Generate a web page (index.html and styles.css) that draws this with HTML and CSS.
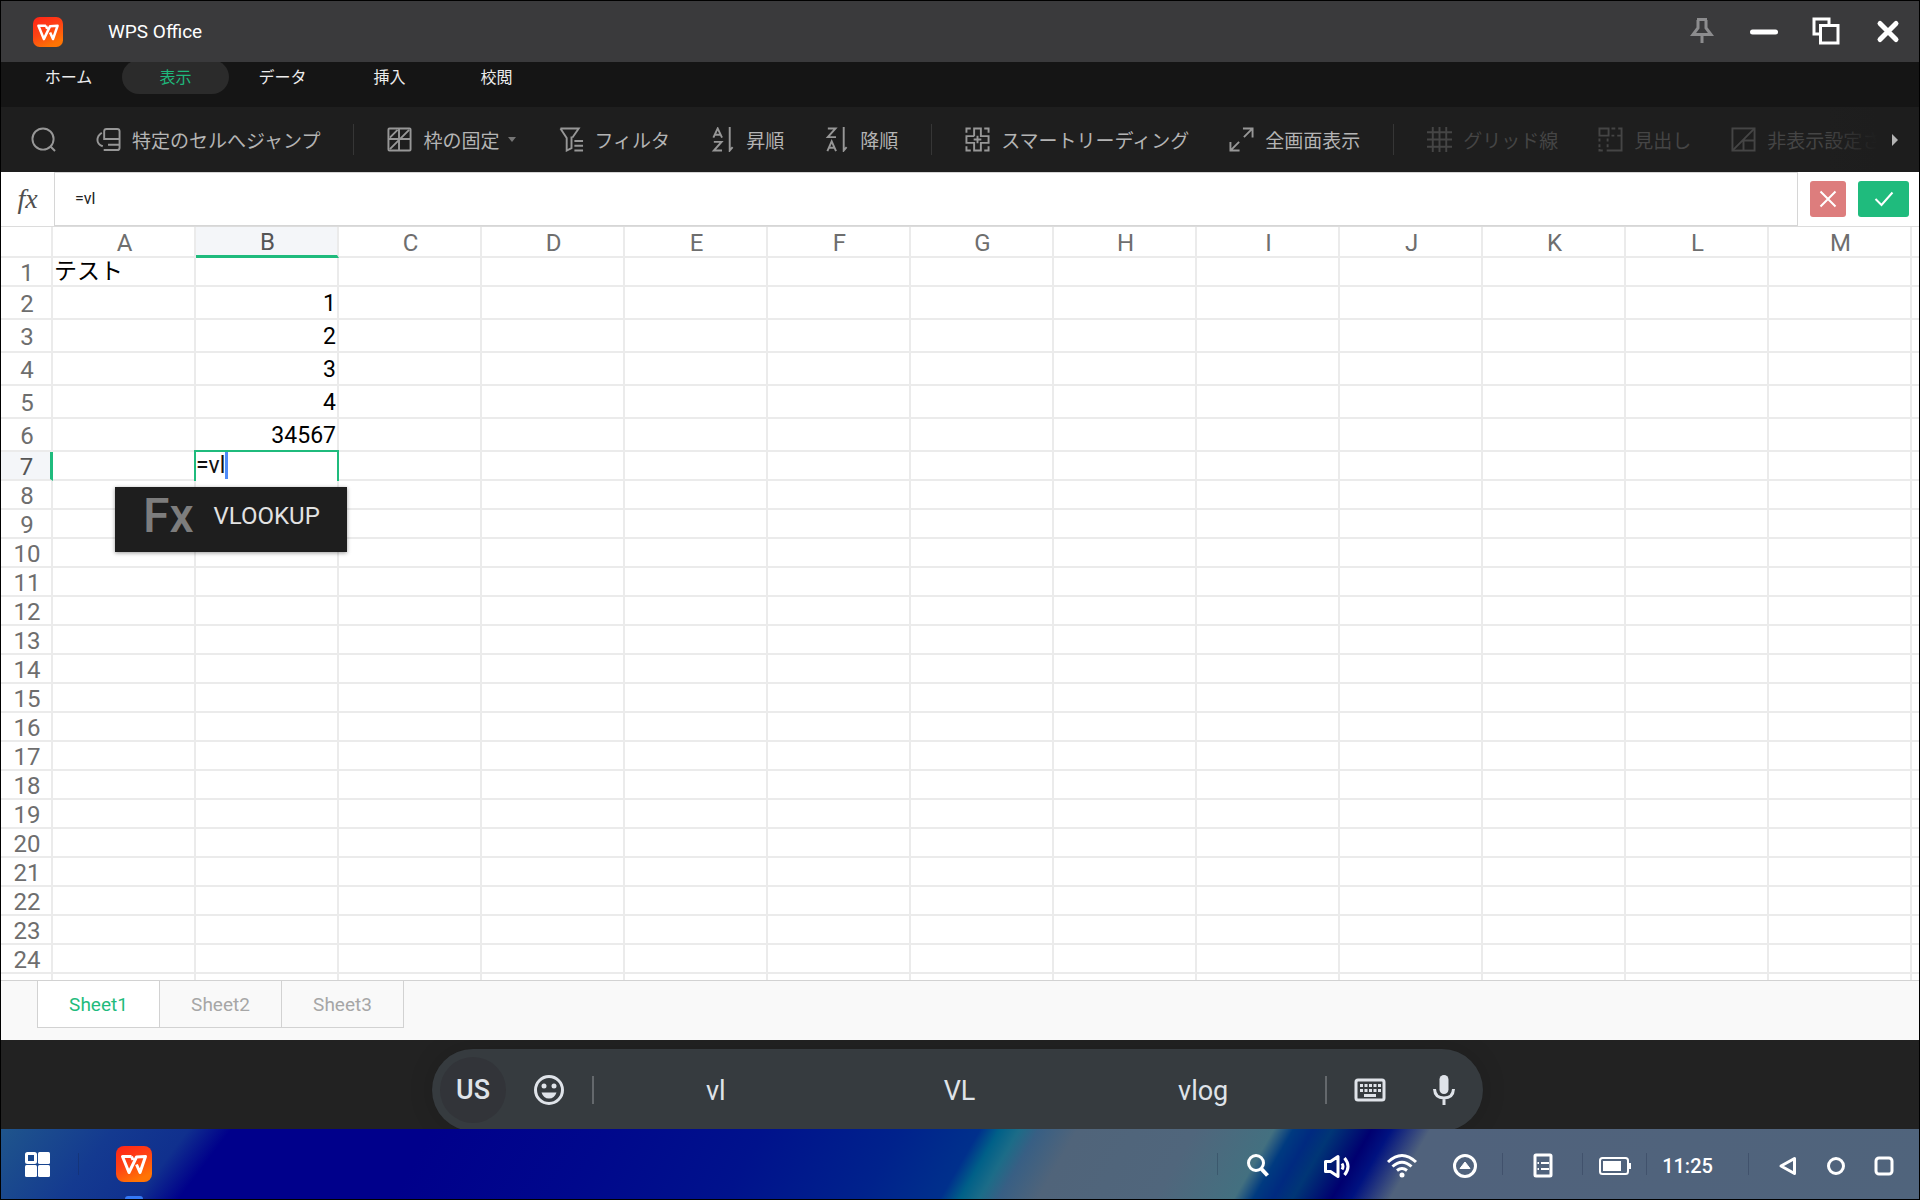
FILE: index.html
```html
<!DOCTYPE html>
<html lang="ja">
<head>
<meta charset="utf-8">
<meta name="viewport" content="width=device-width, initial-scale=1">
<title>WPS Office</title>
<link rel="stylesheet" href="styles.css">
</head>
<body>
<svg class="defs" aria-hidden="true">
  <defs>
    <linearGradient id="logo-fill" x1="0" y1="0" x2=".5" y2="1">
      <stop offset="0" stop-color="#ff2418"/><stop offset=".55" stop-color="#ff4414"/><stop offset="1" stop-color="#ff7404"/>
    </linearGradient>
    <symbol id="wps" viewBox="0 0 36 36">
      <rect width="36" height="36" rx="8" fill="url(#logo-fill)"/>
      <path d="M15.500 10.500H6.500L13 26.500L20.500 11L29.500 10.500L24 26.500L20.500 18.500M15.500 10.500L17 14" fill="none" stroke="#fff" stroke-width="3" stroke-linejoin="round"/>
    </symbol>
  </defs>
</svg>

<div class="app">
  <header class="titlebar">
    <svg class="titlebar-logo" viewBox="0 0 36 36" aria-hidden="true"><use href="#wps"/></svg>
    <h1 class="title">WPS Office</h1>
    <div class="window-controls">
      <button class="window-button pin" aria-label="ピン留め"><svg width="24" height="28" viewBox="0 0 24 28"><path d="M7 2.500H17M8 3V11L3 17.500H21L16 11V3M12 18V26" stroke-width="3"/></svg></button>
      <button class="window-button" aria-label="最小化"><svg width="28" height="28" viewBox="0 0 28 28"><path d="M2.500 15H25.500" stroke-width="5" stroke-linecap="round"/></svg></button>
      <button class="window-button" aria-label="元に戻す"><svg width="28" height="28" viewBox="0 0 28 28"><path d="M17 8V2H2V17H8M8.500 8.500H26V26H8.500Z" stroke-width="3"/></svg></button>
      <button class="window-button" aria-label="閉じる"><svg width="28" height="28" viewBox="0 0 28 28"><path d="M6 6.500L22 22.500M22 6.500L6 22.500" stroke-width="5" stroke-linecap="round"/></svg></button>
    </div>
  </header>

  <nav class="tabs" aria-label="メニュー">
    <button class="tab">ホーム</button>
    <button class="tab tab-active">表示</button>
    <button class="tab">データ</button>
    <button class="tab">挿入</button>
    <button class="tab">校閲</button>
  </nav>

  <div class="toolbar" role="toolbar" aria-label="表示">
    <button class="tool" aria-label="検索"><svg class="tool-icon" viewBox="0 0 26 26"><circle cx="12.500" cy="12.500" r="11"/><path d="M20 20L25 25"/></svg></button>
    <button class="tool"><svg class="tool-icon" viewBox="0 0 26 26"><path d="M8.500 10V4.500Q8.500 2 11 2H22Q24.500 2 24.500 4.500V21.500Q24.500 24 22 24H8M8.500 8V12.500H24.500M12.500 18.500H24M6 6Q1.500 9 1.500 13.500Q1.500 18 7 20"/></svg>特定のセルへジャンプ</button>
    <span class="divider"></span>
    <button class="tool"><svg class="tool-icon" viewBox="0 0 26 26"><rect x="1.500" y="1.500" width="23" height="23" rx="1"/><path d="M2 12.500H24M12.500 2V24M11 3L3 11M23 3L3 23"/></svg>枠の固定<span class="caret"></span></button>
    <button class="tool"><svg class="tool-icon" viewBox="0 0 26 26"><path d="M1.500 1.500H20.500L14 11M1.500 1.500L8 11.500V24.500L13 22V10M16 14.500H25M16 19.500H25M16 24.500H25"/></svg>フィルタ</button>
    <button class="tool"><svg class="tool-icon" viewBox="0 0 26 26"><path d="M3.500 11L8 1.500L12.500 11M5 8H11M4 15.500H12L4 24.500H12.500M20.500 0V24.500L23.500 21"/></svg>昇順</button>
    <button class="tool"><svg class="tool-icon" viewBox="0 0 26 26"><path d="M4 1.500H12L4 10.500H12.500M3.500 25L8 15L12.500 25M5 21.500H11M20.500 0V24.500L23.500 21"/></svg>降順</button>
    <span class="divider"></span>
    <button class="tool"><svg class="tool-icon" viewBox="0 0 26 26"><path d="M1.500 6V1.500H6M20 1.500H24.500V6M1.500 20V24.500H6M20 24.500H24.500V20M9.500 9.500V1.500H16.500V9.500H24.500V16.500H16.500V24.500H9.500V16.500H1.500V9.500H9.500M13 9V17M9 13H17"/></svg>スマートリーディング</button>
    <button class="tool"><svg class="tool-icon" viewBox="0 0 26 26"><path d="M14.500 1.500H24.500V11M24 2L15.500 10.500M1.500 15.500V24.500H11M2 24L10.500 15.500"/></svg>全画面表示</button>
    <span class="divider"></span>
    <button class="tool" disabled><svg class="tool-icon" viewBox="0 0 26 26"><path d="M0 5.500H26M0 13H26M0 20.500H26M6 0V26M13 0V26M20 0V26"/></svg>グリッド線</button>
    <button class="tool" disabled><svg class="tool-icon" viewBox="0 0 26 26"><path d="M1.500 1.500H11V9H1.500ZM14 1.500H18M21 1.500H24.500V24.500H9M24 9H20M17 9H14M1.500 12V15M1.500 18V21M1.500 23V24.500H5M10 12V15M10 18V21"/></svg>見出し</button>
    <button class="tool" disabled><svg class="tool-icon" viewBox="0 0 26 26"><rect x="1.500" y="1.500" width="23" height="23"/><path d="M24 2L2 24M24 14H13V24"/></svg>非表示設定された</button>
    <button class="toolbar-scroll" aria-label="次へ"><span class="scroll-arrow"></span></button>
  </div>

  <div class="formula-bar">
    <label class="formula-label" for="formula">fx</label>
    <input class="formula-input" id="formula" type="text" value="=vl">
    <div class="formula-actions">
      <button class="formula-cancel" aria-label="キャンセル"><svg width="18" height="18" viewBox="0 0 18 18"><path d="M1.500 1.500L16.500 16.500M16.500 1.500L1.500 16.500"/></svg></button>
      <button class="formula-accept" aria-label="確定"><svg width="20" height="16" viewBox="0 0 20 16"><path d="M1.500 8L7.500 14L18.500 1.500"/></svg></button>
    </div>
  </div>

  <main class="grid">
    <table class="sheet">
      <thead class="sheet-head"></thead>
      <tbody class="sheet-body"></tbody>
    </table>
  </main>

  <div class="sheet-tabs">
    <button class="sheet-tab sheet-tab-active">Sheet1</button>
    <button class="sheet-tab">Sheet2</button>
    <button class="sheet-tab">Sheet3</button>
  </div>

  <div class="ime-area">
    <div class="ime">
      <button class="ime-lang">US</button>
      <button class="ime-icon" aria-label="絵文字"><svg width="32" height="32" viewBox="0 0 32 32"><circle cx="16" cy="16" r="13.500" fill="none" stroke="#dfe3e9" stroke-width="3"/><circle cx="11" cy="12" r="2.500"/><circle cx="21" cy="12" r="2.500"/><path d="M8.500 18.500H23.500Q21.500 24.500 16 24.500Q10.500 24.500 8.500 18.500Z"/></svg></button>
      <div class="suggestions">
        <button class="suggestion">vl</button>
        <button class="suggestion">VL</button>
        <button class="suggestion">vlog</button>
      </div>
      <button class="ime-icon ime-keyboard" aria-label="キーボード"><svg width="32" height="24" viewBox="0 0 32 24"><rect x="2" y="2" width="28" height="20" rx="2" fill="none" stroke="#dfe3e9" stroke-width="3"/><path d="M6 6h3v3H6zM10.500 6h3v3h-3zM15 6h3v3h-3zM19.500 6h3v3h-3zM24 6h3v3h-3zM6 11h3v3H6zM10.500 11h3v3h-3zM15 11h3v3h-3zM19.500 11h3v3h-3zM24 11h3v3h-3zM10 16h12v3H10z"/></svg></button>
      <button class="ime-icon ime-mic" aria-label="音声入力"><svg width="24" height="32" viewBox="0 0 24 32"><rect x="7.500" y="1" width="9" height="19" rx="4.500"/><path d="M2.500 15Q3 24 12 24Q21 24 21.500 15M12 24V31" fill="none" stroke="#dfe3e9" stroke-width="3"/></svg></button>
    </div>
  </div>

  <footer class="taskbar">
    <button class="task-button task-start" aria-label="アプリ一覧"><svg width="25" height="25" viewBox="0 0 25 25"><rect x="1.500" y="1.500" width="9" height="9" rx="1" fill="none" stroke="#fff" stroke-width="3"/><rect x="13" width="12" height="12" rx="1.500" fill="#fff"/><rect y="13" width="12" height="12" rx="1.500" fill="#fff"/><rect x="13" y="13" width="12" height="12" rx="1.500" fill="#fff"/></svg></button>
    <span class="task-divider"></span>
    <button class="task-button task-app" aria-label="WPS Office"><svg width="36" height="36" viewBox="0 0 36 36"><use href="#wps"/></svg></button>
    <div class="tray">
      <span class="task-divider"></span>
      <button class="task-button tray-wide" aria-label="検索"><svg width="24" height="26" viewBox="0 0 24 26"><circle cx="10" cy="10" r="7.500"/><path d="M15.500 16L21.500 22.500" stroke-width="4"/></svg></button>
      <button class="task-button tray-wide" aria-label="音量"><svg width="28" height="24" viewBox="0 0 28 24"><path d="M2.500 7.500H7.500L15 2.500V22.500L7.500 17.500H2.500ZM19 9.500Q21 12.500 19 15.500M21.500 4Q28.500 12.500 21.500 21"/></svg></button>
      <button class="task-button tray-narrow" aria-label="Wi-Fi"><svg width="32" height="26" viewBox="0 0 32 26"><path d="M2 9Q16 -4 30 9M6.500 13.500Q16 5 25.500 13.500M11 17.500Q16 13.500 21 17.500"/><circle cx="16" cy="22" r="2.500" fill="#fff" stroke="none"/></svg></button>
      <button class="task-button tray-medium" aria-label="展開"><svg width="26" height="26" viewBox="0 0 26 26"><circle cx="13" cy="13" r="10.500"/><path d="M13 9L18 15.500H8Z" fill="#fff" stroke-width="1"/></svg></button>
      <span class="task-divider"></span>
      <button class="task-button tray-wide" aria-label="通知"><svg width="20" height="26" viewBox="0 0 20 26"><rect x="2" y="2" width="16" height="21" rx="1" stroke-width="3"/><path d="M4.500 10H6M8 10H16M4.500 16H6M8 16H16" stroke-width="2"/></svg></button>
      <span class="task-divider"></span>
      <span class="task-status battery"><svg width="32" height="20" viewBox="0 0 32 20"><rect x="1" y="2" width="28" height="16" rx="2.500" stroke-width="2"/><rect x="4" y="5" width="18" height="10" fill="#fff" stroke="none"/><path d="M31 7V13" stroke-width="2"/></svg></span>
      <span class="task-divider"></span>
      <time class="task-status clock">11:25</time>
      <span class="task-divider"></span>
      <div class="nav-buttons">
        <button class="task-button nav-button" aria-label="戻る"><svg width="20" height="20" viewBox="0 0 20 20"><path d="M16.500 2.500V17.500L3 10Z"/></svg></button>
        <button class="task-button nav-button" aria-label="ホーム"><svg width="20" height="20" viewBox="0 0 20 20"><circle cx="10" cy="10" r="7.500"/></svg></button>
        <button class="task-button nav-button" aria-label="履歴"><svg width="20" height="20" viewBox="0 0 20 20"><rect x="2" y="2" width="16" height="16" rx="3"/></svg></button>
      </div>
    </div>
  </footer>
</div>
<script src="sheet.js"></script>
</body>
</html>
```
FILE: styles.css
```css
* {
  box-sizing: border-box;
}

body {
  margin: 0;
  background: #000;
  font-family: Roboto, "Noto Sans CJK JP", sans-serif;
}

button {
  margin: 0;
  padding: 0;
  border: 0;
  background: none;
  color: inherit;
  font: inherit;
  white-space: nowrap;
}

svg {
  display: block;
  flex: none;
}

.defs {
  position: absolute;
  width: 0;
  height: 0;
}

.app {
  display: flex;
  flex-direction: column;
  height: 100vh;
  border: 1px solid #000;
  overflow: hidden;
}

/* Title bar */
.titlebar {
  flex: none;
  display: flex;
  align-items: center;
  height: 61px;
  padding: 0 0 0 32px;
  background: #3a3a3c;
  color: #fff;
}

.titlebar-logo {
  width: 30px;
  height: 30px;
}

.title {
  flex: 1;
  margin: 0 0 0 45px;
  font-size: 19px;
  font-weight: 400;
}

.window-controls {
  display: flex;
}

.window-button {
  display: flex;
  align-items: center;
  justify-content: center;
  width: 62px;
  height: 61px;
  padding-bottom: 2px;
}

.window-button svg {
  fill: none;
  stroke: #fff;
}

.pin svg {
  stroke: #8c8c8e;
}

/* Ribbon tabs */
.tabs {
  flex: none;
  display: flex;
  align-items: center;
  height: 45px;
  padding: 0 0 15px 14px;
  overflow: hidden;
  background: #151515;
}

.tab {
  flex: none;
  width: 107px;
  height: 34px;
  padding-bottom: 2px;
  border-radius: 17px;
  color: #ececec;
  font-size: 16px;
}

.tab-active {
  background: #2b2b2b;
  color: #1fb97c;
}

/* Tools */
.toolbar {
  position: relative;
  flex: none;
  display: flex;
  align-items: center;
  height: 65px;
  padding-left: 10px;
  overflow: hidden;
  background: #1e1e1e;
  color: #b4b4b4;
}

.tool {
  flex: none;
  display: flex;
  align-items: center;
  gap: 11px;
  padding: 4px 20px 0;
  font-size: 19px;
  line-height: 28px;
}

.tool:disabled {
  color: #454545;
}

.tool-icon {
  width: 25px;
  height: 25px;
  margin-bottom: 4px;
  fill: none;
  stroke: #979797;
  stroke-width: 2;
}

.tool:disabled .tool-icon {
  stroke: #454545;
}

.divider {
  flex: none;
  width: 1px;
  height: 31px;
  margin: 0 13px;
  background: #363636;
}

.caret {
  width: 8px;
  margin: 0 3px 4px -3px;
  border: 4px solid transparent;
  border-top: 5px solid #757575;
  border-bottom: 0;
}

.toolbar-scroll {
  position: absolute;
  inset: 0 0 0 auto;
  display: flex;
  align-items: center;
  justify-content: flex-end;
  width: 92px;
  padding-right: 21px;
  background: linear-gradient(90deg, rgba(30, 30, 30, 0), #1d1d1d 50px);
}

.scroll-arrow {
  border: 6px solid transparent;
  border-left: 6px solid #b4b4b4;
  border-right: 0;
}

/* Formula bar */
.formula-bar {
  flex: none;
  display: flex;
  height: 55px;
  border-bottom: 1px solid #dcdcdc;
  background: #fff;
}

.formula-label {
  display: flex;
  align-items: center;
  justify-content: center;
  width: 53px;
  color: #505050;
  font: italic 28px "Liberation Serif", serif;
}

.formula-input {
  flex: 1;
  min-width: 0;
  padding: 0 20px 2px;
  border: 1px solid #d6d6d6;
  outline: 0;
  background: #fff;
  color: #222;
  font: 16px Roboto, sans-serif;
}

.formula-actions {
  display: flex;
  align-items: center;
  gap: 12px;
  padding: 0 10px 0 12px;
}

.formula-cancel,
.formula-accept {
  display: flex;
  align-items: center;
  justify-content: center;
  height: 36px;
  border-radius: 3px;
}

.formula-cancel {
  width: 36px;
  background: #dd7d7d;
}

.formula-accept {
  width: 51px;
  background: #1fbb7d;
}

.formula-actions svg {
  fill: none;
  stroke: #fff;
  stroke-width: 2;
}

/* Spreadsheet grid */
.grid {
  flex: 1;
  min-height: 0;
  overflow: hidden;
  background: #fff;
}

.sheet {
  width: 100%;
  table-layout: fixed;
  border-collapse: separate;
  border-spacing: 0;
  line-height: 24px;
}

.sheet th,
.sheet td {
  height: 29px;
  padding: 2px 0 0;
  border: solid #ebebeb;
  border-width: 0 2px 2px 0;
  white-space: nowrap;
}

.sheet th {
  width: 143px;
  padding-left: 2px;
  color: #6e6e6e;
  font-size: 24px;
  font-weight: 400;
}

.sheet .corner {
  width: 52px;
}

.sheet .rest {
  width: auto;
  border-right: 0;
}

.sheet thead th {
  height: 31px;
}

.sheet .tall td {
  height: 33px;
}

.sheet td {
  color: #000;
  font-size: 23px;
}

.sheet .text {
  padding: 0 0 0 1px;
}

.sheet .number {
  padding-right: 1px;
  text-align: right;
}

.sheet thead .current {
  border-bottom: 3px solid #1fbb7d;
  background: #f4f6f9;
  color: #555;
}

.sheet tbody .current {
  border-right: 3px solid #1fbb7d;
  background: #f4f6f9;
  color: #555;
}

.sheet .editing {
  position: relative;
}

.cell-editor {
  position: absolute;
  inset: -2px -2px -2px -2px;
  z-index: 1;
  display: flex;
  border: 2px solid #1fbb7d;
  border-bottom: 0;
  background: #fff;
}

.cell-input {
  width: 29px;
  padding: 0 0 3px;
  border: 0;
  outline: 0;
  color: #111;
  font: 23px Roboto, sans-serif;
}

.text-caret {
  width: 3px;
  height: 27px;
  background: #4f8bf8;
}

/* Function completion list, hanging below the edited cell */
.completion {
  position: absolute;
  top: 35px;
  left: -81px;
  z-index: 2;
  display: flex;
  align-items: center;
  gap: 20px;
  width: 232px;
  height: 65px;
  padding: 0 0 8px 28px;
  background: #1e1e1e;
  box-shadow: 0 1px 4px rgba(0, 0, 0, .4);
  color: #e2e2e2;
  font-size: 24px;
}

.completion-mark {
  color: #7d7d7d;
  font-size: 48px;
  font-weight: 500;
}

/* Sheet tabs */
.sheet-tabs {
  flex: none;
  display: flex;
  height: 60px;
  padding: 0 0 12px 36px;
  border-top: 1px solid #d2d2d2;
  background: #f9f9f9;
}

.sheet-tab {
  width: 122px;
  border: solid #d2d2d2;
  border-width: 0 1px 1px 0;
  color: #a6a6a6;
  font-size: 19px;
}

.sheet-tab-active {
  width: 123px;
  border-left-width: 1px;
  background: #fff;
  color: #1fbb7d;
}

/* Input method bar */
.ime-area {
  flex: none;
  display: flex;
  justify-content: center;
  height: 89px;
  padding: 9px 5px 0 0;
  overflow: hidden;
  background: #222;
}

.ime {
  display: flex;
  align-items: center;
  width: 1051px;
  height: 82px;
  padding: 0 8px;
  border-radius: 41px;
  background: #363b3f;
  box-shadow: 0 0 24px rgba(0, 0, 0, .15);
  color: #dfe3e9;
  font-size: 27px;
}

.ime-lang {
  width: 66px;
  height: 66px;
  border-radius: 50%;
  background: #323439;
  font-weight: 500;
}

.ime-icon {
  display: flex;
  align-items: center;
  justify-content: center;
  width: 86px;
  height: 66px;
}

.ime-icon svg {
  fill: #dfe3e9;
}

.suggestions {
  flex: 1;
  display: flex;
  border: solid #64686c;
  border-width: 0 2px;
}

.suggestion {
  flex: 1;
  height: 28px;
  line-height: 30px;
}

.ime-mic {
  width: 62px;
}

/* System taskbar */
.taskbar {
  flex: none;
  display: flex;
  align-items: center;
  height: 70px;
  background:
    linear-gradient(127deg, #1f558c 0, #143a90 90px, #10308e 150px, rgba(0, 0, 139, 0) 184px),
    linear-gradient(120deg, #00008b 22%, #00088c 31%, #00128c 39%, #00228c 46%, #00308c 50%, #006088 51%, #1c6c88 52%, #385f84 53%, #50647a 55%, #50667c 61%, #437080 65%, #003a80 66%, #002a80 67%, #003676 68%, #000070 70%, #001280 71%, #50627c 73%, #50647c 100%);
  color: #fff;
}

.task-button,
.task-status {
  flex: none;
  display: flex;
  align-items: center;
  justify-content: center;
  height: 70px;
}

.task-button svg,
.task-status svg {
  fill: none;
  stroke: #fff;
  stroke-width: 3;
  stroke-linejoin: round;
}

.task-start {
  width: 77px;
  padding-right: 4px;
}

.task-start svg,
.task-app svg {
  stroke: none;
}

.task-divider {
  flex: none;
  width: 1px;
  height: 22px;
  background: rgba(20, 30, 60, .25);
}

.task-app {
  position: relative;
  width: 36px;
  margin-left: 37px;
}

.task-app::after {
  content: "";
  position: absolute;
  bottom: 0;
  width: 18px;
  height: 3px;
  border-radius: 3px 3px 0 0;
  background: #3478f6;
}

.tray {
  display: flex;
  align-items: center;
  margin-left: auto;
}

.tray .task-button,
.tray .task-status {
  padding-top: 3px;
}

.tray-wide {
  width: 79px;
}

.tray-medium {
  width: 74px;
}

.tray-narrow {
  width: 52px;
}

.battery {
  width: 63px;
}

.clock {
  width: 101px;
  padding-right: 20px;
  font-size: 20px;
  font-weight: 500;
}

.nav-buttons {
  display: flex;
  padding: 0 11px 0 15px;
}

.nav-button {
  width: 48px;
}
```
FILE: sheet.js
```js
const columns = "ABCDEFGHIJKLM".split("");
const rowCount = 25;
const tallRows = [2, 3, 4, 5, 6];
const cells = { A1: "テスト", B2: 1, B3: 2, B4: 3, B5: 4, B6: 34567 };
const active = { column: "B", row: 7, value: "=vl", completion: "VLOOKUP" };

const headCells = columns
  .map((c) => `<th scope="col"${c === active.column ? ' class="current"' : ""}>${c}</th>`)
  .join("");
document.querySelector(".sheet-head").innerHTML =
  `<tr><th class="corner"></th>${headCells}<th class="rest"></th></tr>`;

function cell(column, row) {
  if (column === active.column && row === active.row) {
    return `<td class="editing">
      <div class="cell-editor">
        <input class="cell-input" type="text" aria-label="${column}${row}" value="${active.value}">
        <span class="text-caret"></span>
      </div>
      <button class="completion"><span class="completion-mark">Fx</span>${active.completion}</button>
    </td>`;
  }
  const value = cells[column + row];
  if (value === undefined) return "<td></td>";
  return `<td class="${typeof value === "number" ? "number" : "text"}">${value}</td>`;
}

let body = "";
for (let row = 1; row <= rowCount; row++) {
  body += `<tr${tallRows.includes(row) ? ' class="tall"' : ""}>
    <th scope="row"${row === active.row ? ' class="current"' : ""}>${row}</th>
    ${columns.map((c) => cell(c, row)).join("")}<td class="rest"></td></tr>`;
}
document.querySelector(".sheet-body").innerHTML = body;
```
